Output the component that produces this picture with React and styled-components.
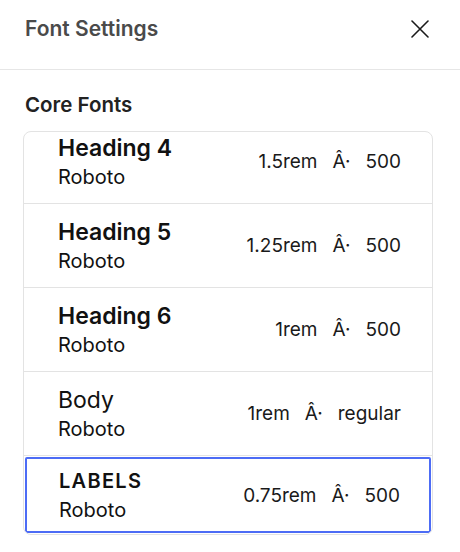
import React, { useEffect, useRef } from "react";
import styled, { createGlobalStyle } from "styled-components";

const fonts = [
  { name: "Heading 1", family: "Roboto", size: "2.5rem", weight: "700" },
  { name: "Heading 2", family: "Roboto", size: "2rem", weight: "700" },
  { name: "Heading 3", family: "Roboto", size: "1.75rem", weight: "600" },
  { name: "Heading 4", family: "Roboto", size: "1.5rem", weight: "500" },
  { name: "Heading 5", family: "Roboto", size: "1.25rem", weight: "500" },
  { name: "Heading 6", family: "Roboto", size: "1rem", weight: "500" },
  { name: "Body", family: "Roboto", size: "1rem", weight: "regular", regular: true },
  { name: "LABELS", family: "Roboto", size: "0.75rem", weight: "500", label: true, selected: true },
];

function App() {
  const listRef = useRef(null);
  useEffect(() => {
    // the list is scrolled to its end
    if (listRef.current) listRef.current.scrollTop = listRef.current.scrollHeight;
  }, []);

  return (
    <Panel>
      <GlobalStyle />
      <Header>
        <Title>Font Settings</Title>
        <CloseButton aria-label="Close">
          <svg width="18" height="18" viewBox="0 0 18 18">
            <path d="M1 1L17 17M17 1L1 17" stroke="#1a1a1a" strokeWidth="1.6" strokeLinecap="round" />
          </svg>
        </CloseButton>
      </Header>
      <Section>
        <SectionTitle>Core Fonts</SectionTitle>
        <List ref={listRef}>
          {fonts.map((f) => (
            <Row key={f.name} $selected={f.selected}>
              <Names>
                <FontName $regular={f.regular} $label={f.label}>
                  {f.name}
                </FontName>
                <Family>{f.family}</Family>
              </Names>
              <Meta>
                <span>{f.size}</span>
                <span>Â·</span>
                <span>{f.weight}</span>
              </Meta>
            </Row>
          ))}
        </List>
      </Section>
    </Panel>
  );
}

export default App;

const GlobalStyle = createGlobalStyle`
  body {
    margin: 0;
    background: #fff;
    font-family: Inter, "Noto Sans", sans-serif;
  }
`;

const Panel = styled.div`
  width: 460px;
  height: 552px;
  background: #fff;
  overflow: hidden;
`;

const Header = styled.div`
  height: 70px;
  box-sizing: border-box;
  padding: 17px 31px 0 25px;
  border-bottom: 1px solid #e6e6e6;
  display: flex;
  justify-content: space-between;
  align-items: flex-start;
`;

const Title = styled.div`
  font-size: 21px;
  line-height: 24px;
  font-weight: 600;
  color: #4a4a4a;
`;

const CloseButton = styled.button`
  border: none;
  background: none;
  padding: 0;
  margin-top: 3px;
  width: 18px;
  height: 18px;
  display: flex;
  cursor: pointer;
`;

const Section = styled.div`
  padding: 23px 27px 0 23px;
`;

const SectionTitle = styled.div`
  font-size: 20.5px;
  line-height: 24px;
  font-weight: 600;
  color: #222;
  padding-left: 2px;
  margin-bottom: 14px;
`;

const List = styled.div`
  height: 404px;
  box-sizing: border-box;
  border: 1px solid #e3e3e3;
  border-radius: 8px;
  overflow-y: auto;
  scrollbar-width: none;
  &::-webkit-scrollbar {
    display: none;
  }
`;

const Row = styled.div`
  box-sizing: border-box;
  display: flex;
  align-items: center;
  justify-content: space-between;
  height: ${(p) => (p.$selected ? "76px" : "84px")};
  margin: ${(p) => (p.$selected ? "1px" : "0")};
  padding: ${(p) => (p.$selected ? "0 29px 0 32px" : "0 31px 0 34px")};
  border-bottom: 1px solid #e3e3e3;
  ${(p) =>
    p.$selected &&
    `
    border: 2px solid #4d6cf5;
    border-radius: 2px;
  `}
`;

const Names = styled.div`
  display: flex;
  flex-direction: column;
  gap: 3px;
  color: #111;
`;

const FontName = styled.div`
  font-size: ${(p) => (p.$label ? "20px" : "23px")};
  line-height: 28px;
  font-weight: ${(p) => (p.$regular ? 400 : 600)};
  letter-spacing: ${(p) => (p.$label ? "1.3px" : "0")};
`;

const Family = styled.div`
  font-size: 20px;
  line-height: 25px;
  color: #111;
`;

const Meta = styled.div`
  display: flex;
  align-items: center;
  gap: 15px;
  font-size: 19px;
  color: #1a1a1a;
`;
